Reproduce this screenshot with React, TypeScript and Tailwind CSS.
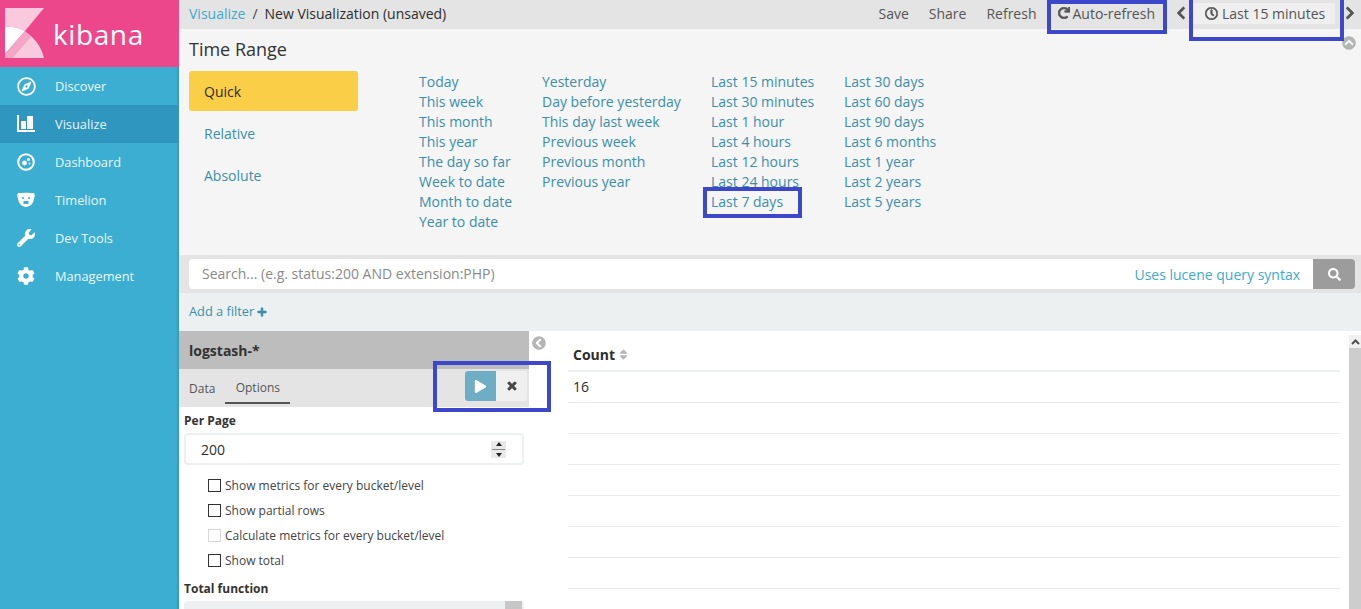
import React from "react";
import { FaRegCompass, FaWrench, FaCog, FaRedo, FaRegClock, FaChevronLeft, FaChevronRight, FaPlay, FaTimes, FaSearch, FaPlus, FaChevronCircleUp, FaChevronCircleLeft, FaSort } from "react-icons/fa";

const Logo = () => (
  <svg width="40" height="51" viewBox="0 0 40 51" className="shrink-0">
    <path d="M0 0H39L20 23Q10 18 0 19Z" fill="#F9C9DE" />
    <path d="M0 19Q10 18 20 23L0 46Z" fill="#FFFFFF" />
    <path d="M0 46L20 23L26 28L7 50H0Z" fill="#F5A6C6" />
    <path d="M7 50L26 28Q36 37 39 50Z" fill="#F9C9DE" />
  </svg>
);

const VizIcon = () => (
  <svg width="18" height="18" viewBox="0 0 18 18" fill="white">
    <path d="M0 0H2V15H18V17H0Z" />
    <rect x="4" y="6" width="5" height="8" />
    <rect x="10" y="1" width="6" height="13" />
  </svg>
);

const DashIcon = () => (
  <svg width="18" height="18" viewBox="0 0 18 18">
    <circle cx="9" cy="9" r="7.800" fill="none" stroke="white" strokeWidth="2" />
    <circle cx="7.500" cy="10" r="2.400" fill="white" />
    <circle cx="11.500" cy="6.500" r="1.500" fill="white" />
    <circle cx="12.500" cy="10.500" r="0.900" fill="white" />
  </svg>
);

const BearIcon = () => (
  <svg width="18" height="16" viewBox="0 0 18 16">
    <path d="M1 1H5C7 .5 11 .5 13 1H17C18 3 18 5 17 6C17 11 13 15 9 15C5 15 1 11 1 6C0 5 0 3 1 1Z" fill="white" />
    <circle cx="6" cy="6" r="1.100" fill="#3CAED2" />
    <circle cx="12" cy="6" r="1.100" fill="#3CAED2" />
    <path d="M6.500 9H11.500V12H6.500Z" fill="#3CAED2" />
  </svg>
);

const nav: [string, React.ReactNode, boolean][] = [
  ["Discover", <FaRegCompass size={19} />, false],
  ["Visualize", <VizIcon />, true],
  ["Dashboard", <DashIcon />, false],
  ["Timelion", <BearIcon />, false],
  ["Dev Tools", <FaWrench size={18} />, false],
  ["Management", <FaCog size={18} />, false],
];

const cols = [
  ["Today", "This week", "This month", "This year", "The day so far", "Week to date", "Month to date", "Year to date"],
  ["Yesterday", "Day before yesterday", "This day last week", "Previous week", "Previous month", "Previous year"],
  ["Last 15 minutes", "Last 30 minutes", "Last 1 hour", "Last 4 hours", "Last 12 hours", "Last 24 hours", "Last 7 days"],
  ["Last 30 days", "Last 60 days", "Last 90 days", "Last 6 months", "Last 1 year", "Last 2 years", "Last 5 years"],
];
const colW = ["w-[123px]", "w-[169px]", "w-[133px]", "w-[120px]"];

const Check = ({ label, disabled }: { label: string; disabled?: boolean }) => (
  <div className="flex items-center h-[25px] pl-[29px] text-[12px] text-[#444]">
    <span className={`w-[13px] h-[13px] bg-white border mr-[4px] ${disabled ? "border-[#d8d8d8]" : "border-[#333]"}`} />
    {label}
  </div>
);

const Mark = ({ className }: { className: string }) => (
  <div className={`absolute border-[4px] border-[#3D47C9] pointer-events-none ${className}`} />
);

export default function App() {
  return (
    <div className="relative flex w-[1361px] h-[609px] overflow-hidden bg-white text-[14px] text-[#2d2d2d] font-['Open_Sans',sans-serif]">
      <aside className="w-[179px] shrink-0 bg-[#3CAED2] shadow-[inset_-3px_0_3px_-2px_rgba(0,0,0,0.18)]">
        <div className="h-[67px] bg-[#EC478B] flex items-center pl-[5px]">
          <Logo />
          <span className="ml-[8px] text-white text-[28px] leading-none tracking-[0.6px] font-medium">kibana</span>
        </div>
        <nav>
          {nav.map(([label, icon, active]) => (
            <div key={label as string} className={`h-[38px] flex items-center text-white text-[12.800px] ${active ? "bg-[#2F96BF]" : ""}`}>
              <span className="w-[55px] pl-[17px] flex items-center justify-start">{icon}</span>
              <span className="opacity-90 relative top-[1px]">{label}</span>
            </div>
          ))}
        </nav>
      </aside>

      <main className="flex-1 min-w-0 flex flex-col">
        <header className="h-[29px] shrink-0 bg-[#E4E4E4] flex items-center pl-[10px] pr-[4px] pb-[3px] text-[14px]">
          <span className="text-[#3FA9CF]">Visualize</span>
          <span className="mx-[7px] text-[#444]">/</span>
          <span>New Visualization (unsaved)</span>
          <div className="ml-auto flex items-center text-[#555]">
            <span className="mr-[20px]">Save</span>
            <span className="mr-[20px]">Share</span>
            <span className="mr-[21px]">Refresh</span>
            <span className="flex items-center mr-[19px]"><FaRedo size={12} stroke="currentColor" strokeWidth={30} className="mr-[3px]" />Auto-refresh</span>
            <FaChevronLeft size={14} stroke="currentColor" strokeWidth={30} className="mr-[5px]" />
            <span className="flex items-center bg-[#EFEFEF] h-[21px] w-[142px] pl-[12px]"><FaRegClock size={13} stroke="currentColor" strokeWidth={25} className="mr-[4px]" />Last 15 minutes</span>
            <FaChevronRight size={14} stroke="currentColor" strokeWidth={30} className="ml-[8px]" />
          </div>
        </header>

        <section className="relative h-[226px] shrink-0 bg-[#F5F5F5] pl-[10px]">
          <h2 className="text-[18px] leading-[25px] pt-[8px] h-[42px] text-[#333]">Time Range</h2>
          <div className="flex">
            <div className="w-[169px] shrink-0 text-[14px]">
              <div className="h-[40px] bg-[#FBCE47] rounded-[3px] flex items-center pl-[15px]">Quick</div>
              <div className="h-[44px] flex items-center pl-[15px] text-[#3B8FAB]">Relative</div>
              <div className="h-[40px] flex items-center pl-[15px] text-[#3B8FAB]">Absolute</div>
            </div>
            <div className="flex pl-[61px] pt-[1px]">
              {cols.map((c, i) => (
                <div key={i} className={colW[i]}>
                  {c.map((t) => (
                    <div key={t} className="h-[20px] leading-[20px] text-[#3B8FAB] text-[14px] whitespace-nowrap">{t}</div>
                  ))}
                </div>
              ))}
            </div>
          </div>
          <FaChevronCircleUp size={14} className="absolute right-[5px] top-[7px] text-[#B5B5B5]" />
        </section>

        <div className="h-[38px] shrink-0 bg-[#E4E4E4] flex items-center pl-[10px] pr-[6px]">
          <div className="flex-1 h-[30px] bg-white rounded-l-[4px] flex items-center pl-[13px] pr-[13px] text-[14px]">
            <span className="text-[#8a8a8a] relative -top-[1px]">Search... (e.g. status:200 AND extension:PHP)</span>
            <span className="ml-auto text-[#3FA9CF]">Uses lucene query syntax</span>
          </div>
          <div className="w-[42px] h-[30px] bg-[#9C9C9C] rounded-r-[4px] flex items-center justify-center">
            <FaSearch size={13} className="text-white" />
          </div>
        </div>

        <div className="h-[38px] shrink-0 bg-[#ECF0F1] flex items-center pl-[10px] text-[12.800px] text-[#3B8FAB]">
          Add a filter<FaPlus size={10} stroke="currentColor" strokeWidth={30} className="ml-[3px]" />
        </div>

        <div className="flex-1 min-h-0 flex">
          <div className="w-[350px] shrink-0 overflow-hidden">
            <div className="h-[38px] bg-[#BDBDBD] flex items-center pl-[10px] text-[14px] font-bold text-[#333]">logstash-*</div>
            <div className="h-[38px] bg-[#E4E4E4] flex items-stretch pl-[10px] text-[12px] text-[#555]">
              <span className="flex items-center pt-[1px] mr-[10px]">Data</span>
              <span className="flex items-center justify-center pt-[4px] w-[65px] h-[35px] border-b-2 border-[#555]">Options</span>
              <div className="ml-auto mr-[2px] mt-[2px] h-[30px] flex">
                <span className="w-[31px] bg-[#6FADC5] rounded-l-[3px] flex items-center justify-center"><FaPlay size={13} className="text-white" /></span>
                <span className="w-[31px] bg-[#F0F0F0] rounded-r-[3px] flex items-center justify-center"><FaTimes size={12} stroke="currentColor" strokeWidth={40} className="text-[#444]" /></span>
              </div>
            </div>
            <div className="pl-[5px] pr-[5px]">
              <div className="text-[12px] font-bold leading-[16px] pt-[6px] h-[26px] text-[#333]">Per Page</div>
              <div className="h-[32px] border-2 border-[#ECF0F1] rounded-[4px] bg-white flex items-center pl-[15px] pr-[16px] text-[14px]">
                200
                <span className="ml-auto w-[15px] h-[17px] bg-[#E9E9E9] flex flex-col items-center justify-center gap-[3px]">
                  <span className="w-0 h-0 border-x-[3px] border-x-transparent border-b-[4px] border-b-[#222]" />
                  <span className="w-[13px] h-px bg-[#888]" />
                  <span className="w-0 h-0 border-x-[3px] border-x-transparent border-t-[4px] border-t-[#222]" />
                </span>
              </div>
            </div>
            <div className="pt-[8px]">
              <Check label="Show metrics for every bucket/level" />
              <Check label="Show partial rows" />
              <Check label="Calculate metrics for every bucket/level" disabled />
              <Check label="Show total" />
            </div>
            <div className="pl-[5px] pr-[5px]">
              <div className="text-[12px] font-bold h-[21px] pt-[8px] leading-[16px] text-[#333]">Total function</div>
              <div className="h-[30px] mt-[7px] bg-[#ECF0F1] rounded-t-[4px] flex justify-end pr-[2px]">
                <span className="w-[17px] h-[30px] bg-[#C6C6C6]" />
              </div>
            </div>
          </div>

          <div className="relative flex-1 min-w-0 bg-white pl-[39px] pr-[21px]">
            <FaChevronCircleLeft size={14} className="absolute left-[3px] top-[5px] text-[#B5B5B5]" />
            <div className="h-[41px] border-b-2 border-[#ECF0F1] flex items-end pb-[5px] pl-[5px] font-bold text-[14px] text-[#2d2d2d]">
              Count<FaSort size={13} className="ml-[2px] mb-[4px] text-[#B5B5B5]" />
            </div>
            <div className="h-[31px] border-b border-[#E8ECED] flex items-center pl-[5px] pb-[2px] text-[14px]">16</div>
            {[0, 1, 2, 3, 4, 5].map((i) => (
              <div key={i} className="h-[31px] border-b border-[#E8ECED]" />
            ))}
            <div className="absolute right-0 top-[4px] bottom-0 w-[12px] flex flex-col">
              <span className="h-[13px] bg-[#F1F1F1] flex items-center justify-center"><svg width="9" height="6" viewBox="0 0 9 6"><path d="M1 5L4.500 1.500L8 5" fill="none" stroke="#505050" strokeWidth="2" /></svg></span>
              <span className="flex-1 bg-[#CDCDCD]" />
            </div>
          </div>
        </div>
      </main>

      <Mark className="left-[1047px] top-[0px] w-[120px] h-[34px]" />
      <Mark className="left-[1189px] top-[-4px] w-[155px] h-[45px]" />
      <Mark className="left-[703px] top-[187px] w-[99px] h-[31px]" />
      <Mark className="left-[433px] top-[361px] w-[118px] h-[51px]" />
    </div>
  );
}
